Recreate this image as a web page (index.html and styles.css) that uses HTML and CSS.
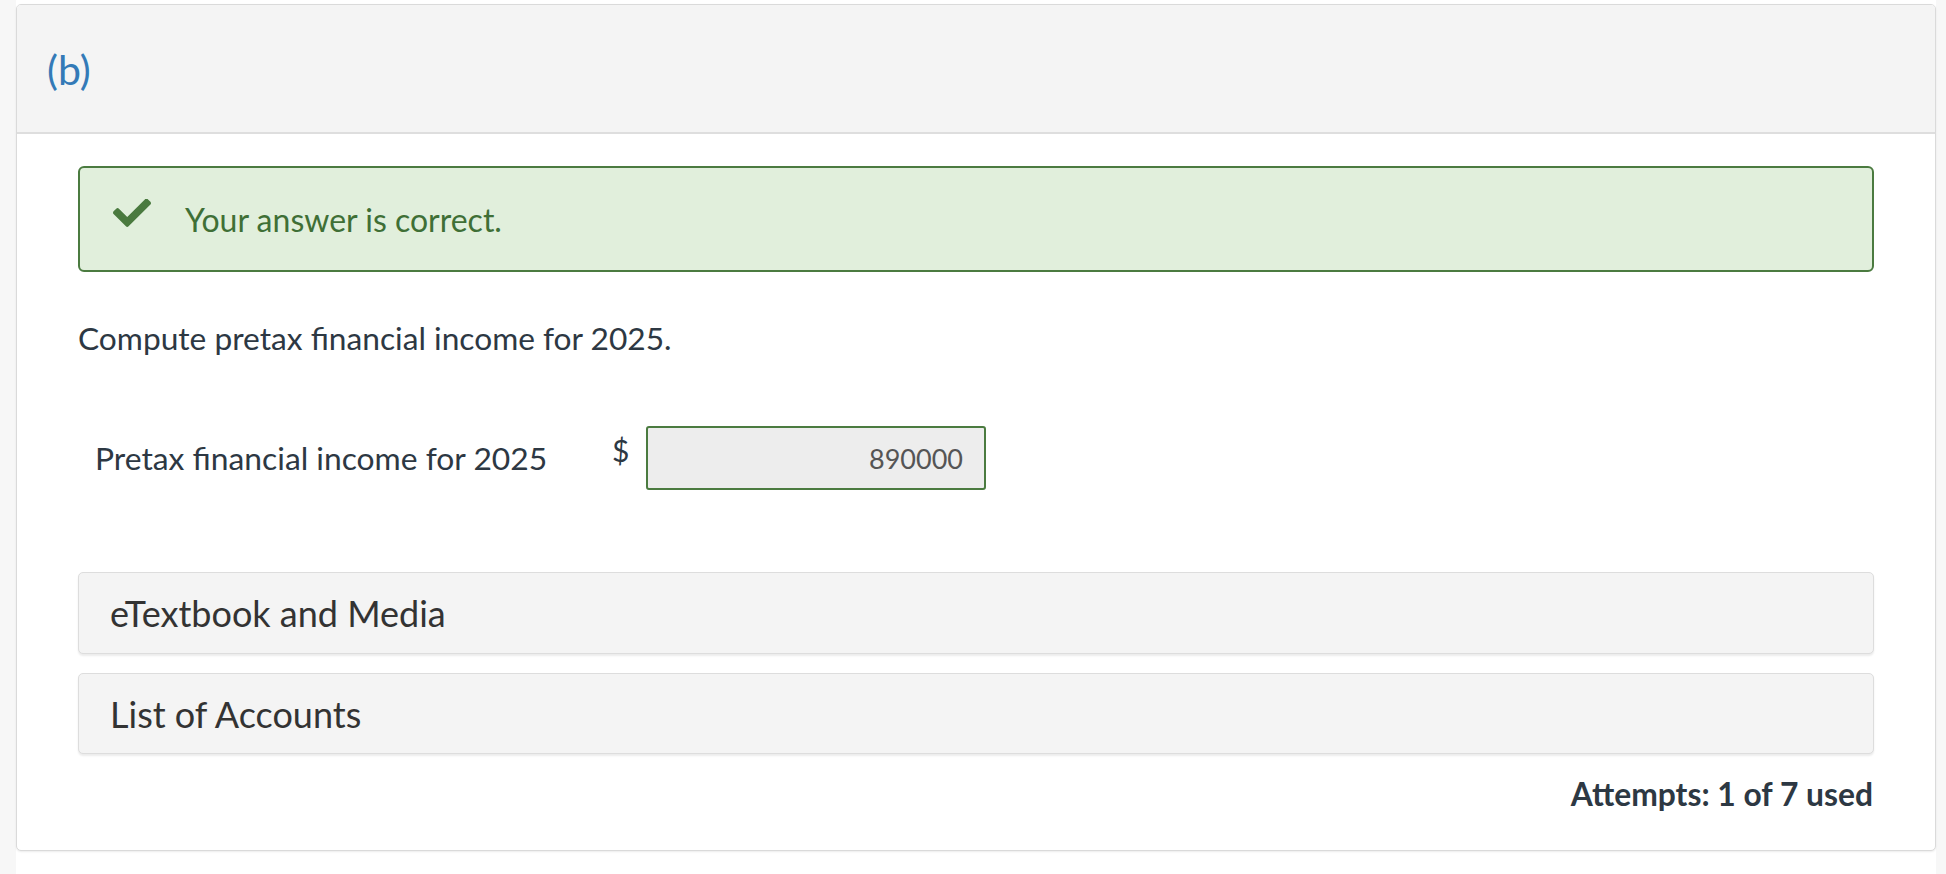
FILE: index.html
```html
<!DOCTYPE html>
<html lang="en">
<head>
<meta charset="utf-8">
<title>Part (b)</title>
<link rel="stylesheet" href="styles.css">
</head>
<body>
<div class="card">
  <div class="card-header"><span class="part-label">(b)</span></div>
  <div class="card-body">
    <div class="alert-success">
      <svg class="check-icon" viewBox="0 72 512 375" aria-hidden="true"><path d="M173.9 439.4l-166.4-166.4c-10-10-10-26.2 0-36.2l36.2-36.2c10-10 26.2-10 36.2 0L192 312.7 432.1 72.6c10-10 26.2-10 36.2 0l36.2 36.2c10 10 10 26.2 0 36.2l-294.4 294.4c-10 10-26.2 10-36.2 0z"/></svg>
      <span class="alert-text">Your answer is correct.</span>
    </div>
    <p class="question">Compute pretax financial income for 2025.</p>
    <div class="answer-row">
      <span class="answer-label">Pretax financial income for 2025</span>
      <span class="currency">$</span>
      <div class="answer-input">890000</div>
    </div>
    <div class="panel">eTextbook and Media</div>
    <div class="panel panel-second">List of Accounts</div>
    <div class="attempts">Attempts: 1 of 7 used</div>
  </div>
</div>
</body>
</html>
```

FILE: styles.css
```css
html, body {
  margin: 0;
  padding: 0;
}
body {
  width: 1946px;
  min-height: 874px;
  box-sizing: border-box;
  padding: 4px 10px 0 16px;
  font-family: Lato, "Noto Sans", "Liberation Sans", sans-serif;
  color: #2d3843;
  background: linear-gradient(to right, #f7f7f7 0, #f7f7f7 16px, #ffffff 16px, #ffffff 1936px, #f7f7f7 1936px);
}
.card {
  width: 1920px;
  box-sizing: border-box;
  border: 1px solid #dadada;
  border-radius: 5px;
  box-shadow: 0 1px 2px rgba(0, 0, 0, 0.08);
  background: #ffffff;
  overflow: hidden;
}
.card-header {
  height: 129px;
  background: #f4f4f4;
  border-bottom: 2px solid #dedede;
  display: flex;
  align-items: center;
  padding-left: 30px;
  padding-top: 1px;
  box-sizing: border-box;
}
.part-label {
  font-size: 41px;
  color: #337ab7;
  line-height: 1;
}
.card-body {
  padding: 32px 61px 36px 61px;
}
.alert-success {
  height: 106px;
  box-sizing: border-box;
  border: 2px solid #4b7b40;
  border-radius: 6px;
  background: #e1efdc;
  display: flex;
  align-items: center;
  padding-left: 33px;
}
.check-icon {
  width: 38px;
  height: 28px;
  fill: #4a7a3f;
  margin-top: -12px;
}
.alert-text {
  margin-left: 34px;
  font-size: 32px;
  color: #3f6f36;
}
.question {
  margin: 46px 0 0 0;
  font-size: 31.7px;
  line-height: 40px;
}
.answer-row {
  margin-top: 68px;
  display: flex;
  align-items: center;
  padding-left: 17px;
}
.answer-label {
  width: 517px;
  font-size: 31.8px;
}
.currency {
  width: 34px;
  font-size: 30px;
  margin-top: -16px;
}
.answer-input {
  width: 340px;
  height: 64px;
  box-sizing: border-box;
  border: 2px solid #4b7b40;
  border-radius: 3px;
  background: #ededed;
  color: #555555;
  font-size: 27px;
  display: flex;
  align-items: center;
  justify-content: flex-end;
  padding-right: 21px;
}
.panel {
  margin-top: 82px;
  height: 82px;
  box-sizing: border-box;
  border: 1px solid #dddddd;
  border-radius: 5px;
  background: #f4f4f4;
  box-shadow: 0 2px 2px rgba(0, 0, 0, 0.08);
  display: flex;
  align-items: center;
  padding-left: 31px;
  font-size: 36px;
  color: #333333;
}
.panel-second {
  margin-top: 19px;
  height: 81px;
}
.attempts {
  margin-top: 20px;
  text-align: right;
  font-size: 31.8px;
  font-weight: 700;
  line-height: 40px;
  padding-right: 1px;
}
```
